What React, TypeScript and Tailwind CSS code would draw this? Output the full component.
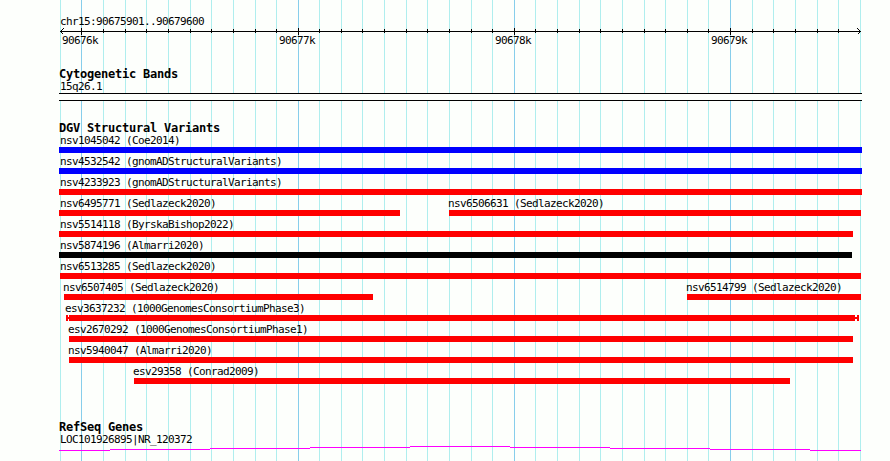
const minorLines = [
  60, 103, 125, 146, 168, 190, 211, 233, 255, 276, 319, 341, 362, 384, 406, 427, 449, 471, 492,
  535, 557, 579, 600, 622, 644, 665, 687, 708, 752, 773, 795, 817, 838, 860,
];
const majorLines = [81, 298, 514, 730];

const scaleLabels = [
  { x: 62, text: "90676k" },
  { x: 279, text: "90677k" },
  { x: 495, text: "90678k" },
  { x: 711, text: "90679k" },
];

type Variant = {
  name: string;
  labelX: number;
  start: number;
  end: number;
  color: string;
  whiskers?: boolean;
};

const RED = "bg-[#ff0000]";
const BLUE = "bg-[#0000ff]";
const BLACK = "bg-black";

const rows: Variant[][] = [
  [{ name: "nsv1045042 (Coe2014)", labelX: 60, start: 59, end: 862, color: BLUE }],
  [{ name: "nsv4532542 (gnomADStructuralVariants)", labelX: 60, start: 59, end: 862, color: BLUE }],
  [{ name: "nsv4233923 (gnomADStructuralVariants)", labelX: 60, start: 59, end: 862, color: RED }],
  [
    { name: "nsv6495771 (Sedlazeck2020)", labelX: 60, start: 59, end: 400, color: RED },
    { name: "nsv6506631 (Sedlazeck2020)", labelX: 448, start: 449, end: 861, color: RED },
  ],
  [{ name: "nsv5514118 (ByrskaBishop2022)", labelX: 60, start: 59, end: 853, color: RED }],
  [{ name: "nsv5874196 (Almarri2020)", labelX: 60, start: 59, end: 852, color: BLACK }],
  [{ name: "nsv6513285 (Sedlazeck2020)", labelX: 60, start: 60, end: 861, color: RED }],
  [
    { name: "nsv6507405 (Sedlazeck2020)", labelX: 63, start: 64, end: 373, color: RED },
    { name: "nsv6514799 (Sedlazeck2020)", labelX: 686, start: 687, end: 861, color: RED },
  ],
  [
    {
      name: "esv3637232 (1000GenomesConsortiumPhase3)",
      labelX: 65,
      start: 69,
      end: 855,
      color: RED,
      whiskers: true,
    },
  ],
  [{ name: "esv2670292 (1000GenomesConsortiumPhase1)", labelX: 68, start: 69, end: 853, color: RED }],
  [{ name: "nsv5940047 (Almarri2020)", labelX: 68, start: 69, end: 853, color: RED }],
  [{ name: "esv29358 (Conrad2009)", labelX: 133, start: 134, end: 790, color: RED }],
];

// the intron line bows by one pixel per segment
const geneSegments = [
  { width: 51, top: 4 },
  { width: 100, top: 3 },
  { width: 100, top: 2 },
  { width: 100, top: 1 },
  { width: 100, top: 0 },
  { width: 100, top: 1 },
  { width: 100, top: 2 },
  { width: 100, top: 3 },
  { width: 51, top: 4 },
];

function GridLines() {
  return (
    <div className="absolute inset-0">
      {minorLines.map((x) => (
        <div key={x} className="absolute inset-y-0 w-px bg-[#afeeee]" style={{ left: x }} />
      ))}
      {majorLines.map((x) => (
        <div key={x} className="absolute inset-y-0 w-px bg-[#87ceeb]" style={{ left: x }} />
      ))}
    </div>
  );
}

function Ruler() {
  return (
    <svg
      className="block h-[7px] w-full stroke-black"
      viewBox="0 0 890 7"
      fill="none"
      shapeRendering="crispEdges"
    >
      <path d="M60 3.5H861" />
      {minorLines.slice(1, -1).map((x) => (
        <path key={x} d={`M${x + 0.5} 1v4`} />
      ))}
      {majorLines.map((x) => (
        <path key={x} d={`M${x + 0.5} 0v7`} />
      ))}
      <path d="M63.5 0.5L60.5 3.5L63.5 6.5M857.5 0.5L860.5 3.5L857.5 6.5" />
    </svg>
  );
}

function Heading({ children }: { children: React.ReactNode }) {
  return (
    <h2 className="h-3 pl-[59px] text-[12px] font-bold leading-3 tracking-[-0.224px]">
      {children}
    </h2>
  );
}

function Whisker({ flip }: { flip?: boolean }) {
  return (
    <div className={flip ? "flex w-1 flex-row-reverse items-center" : "flex w-[3px] items-center"}>
      <div className="h-1.5 w-0.5 bg-[#ff0000]" />
      <div className="h-0.5 grow bg-[#ff0000]" />
    </div>
  );
}

function VariantRow({ items }: { items: Variant[] }) {
  return (
    <div className="grid h-[21px] grid-cols-1 grid-rows-[15px_6px]">
      {items.map((v) => (
        <div
          key={v.name}
          className="col-start-1 row-start-1 pt-[3px] leading-3"
          style={{ paddingLeft: v.labelX }}
        >
          {v.name}
        </div>
      ))}
      {items.map((v) => (
        <div
          key={v.name}
          className="col-start-1 row-start-2 flex"
          style={{ marginLeft: v.whiskers ? v.start - 3 : v.start }}
        >
          {v.whiskers && <Whisker />}
          <div className={v.color} style={{ width: v.end - v.start }} />
          {v.whiskers && <Whisker flip />}
        </div>
      ))}
    </div>
  );
}

export default function App() {
  return (
    <div className="relative h-[461px] w-[890px] overflow-hidden bg-[#fdfffc] font-['DejaVu_Sans_Mono',monospace] text-[11px] tracking-[-0.622px] whitespace-pre text-black">
      <GridLines />
      <div className="relative">
        <header className="pt-[15px]">
          <div className="h-[13px] pl-[60px] leading-[13px]">chr15:90675901..90679600</div>
          <Ruler />
          <div className="grid h-3 leading-3">
            {scaleLabels.map((l) => (
              <span key={l.text} className="col-start-1 row-start-1" style={{ paddingLeft: l.x }}>
                {l.text}
              </span>
            ))}
          </div>
        </header>

        <section className="pt-[21px]">
          <Heading>Cytogenetic Bands</Heading>
          <div className="h-[13px] pl-[60px] leading-[13px]">15q26.1</div>
          <div className="ml-[59px] h-2 w-[803px] border-y border-black bg-[#fdfffc]" />
        </section>

        <section className="pt-[21px]">
          <Heading>DGV Structural Variants</Heading>
          <div className="-mt-0.5">
            {rows.map((items) => (
              <VariantRow key={items[0].name} items={items} />
            ))}
          </div>
        </section>

        <section className="pt-[37px]">
          <Heading>RefSeq Genes</Heading>
          <div className="h-[13px] pl-[60px] leading-[13px]">LOC101926895|NR_120372</div>
          <div className="ml-[59px] flex h-[5px]">
            {geneSegments.map((s, i) => (
              <div key={i} className="h-px bg-[#ff00ff]" style={{ width: s.width, marginTop: s.top }} />
            ))}
          </div>
        </section>
      </div>
    </div>
  );
}
